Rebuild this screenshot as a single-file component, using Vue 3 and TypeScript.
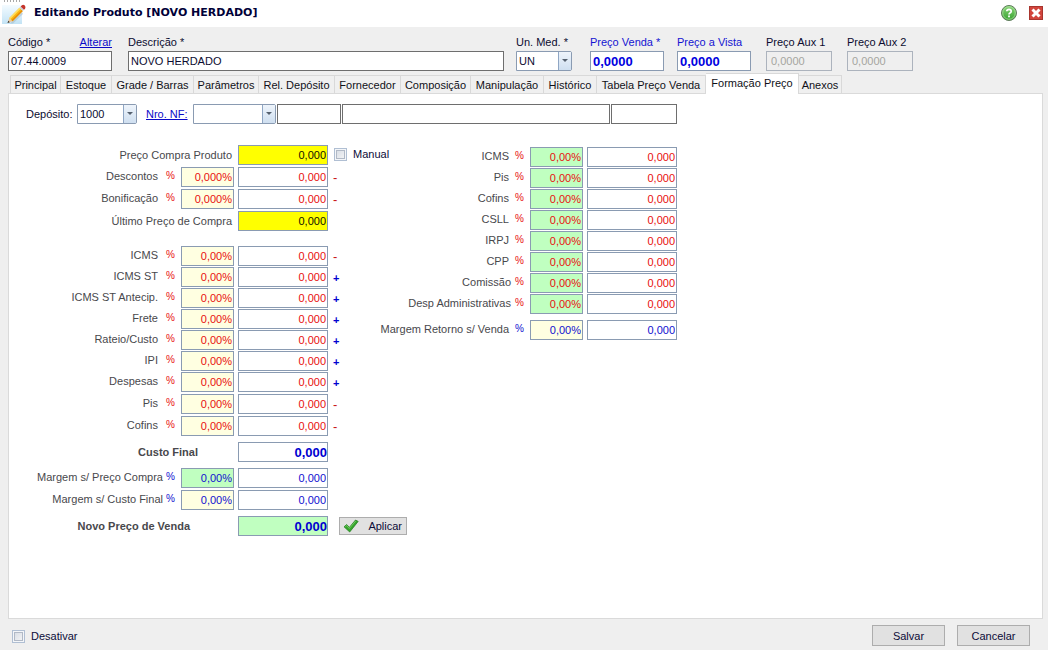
<script setup lang="ts">
import { reactive, ref } from 'vue'

type Tone = 'red' | 'blue' | 'black' | 'total'
type Fill = 'cream' | 'green' | 'yellow' | 'white'

interface Row {
  id: string
  label: string
  kind: 'normal' | 'tight' | 'wide' | 'total' | 'total-long'
  pct?: string
  pctFill?: Fill
  amount: string
  fill: Fill
  tone: Tone
  sign?: '+' | '-'
  extra?: 'manual' | 'apply'
}

interface Group {
  name: string
  rows: Row[]
}

const tabs = [
  'Principal', 'Estoque', 'Grade / Barras', 'Parâmetros', 'Rel. Depósito', 'Fornecedor',
  'Composição', 'Manipulação', 'Histórico', 'Tabela Preço Venda', 'Formação Preço', 'Anexos',
]
const activeTab = ref('Formação Preço')

function cost(id: string, label: string, sign: '+' | '-', pct = '0,00%'): Row {
  return { id, label, kind: 'normal', pct, pctFill: 'cream', amount: '0,000', fill: 'white', tone: 'red', sign }
}

function tax(id: string, label: string, kind: Row['kind'] = 'normal'): Row {
  return { id, label, kind, pct: '0,00%', pctFill: 'green', amount: '0,000', fill: 'white', tone: 'red' }
}

const costGroups = reactive<Group[]>([
  {
    name: 'purchase',
    rows: [
      { id: 'compra', label: 'Preço Compra Produto', kind: 'wide', amount: '0,000', fill: 'yellow', tone: 'black', extra: 'manual' },
      cost('descontos', 'Descontos', '-', '0,000%'),
      cost('bonificacao', 'Bonificação', '-', '0,000%'),
      { id: 'ultimo', label: 'Último Preço de Compra', kind: 'wide', amount: '0,000', fill: 'yellow', tone: 'black' },
    ],
  },
  {
    name: 'charges',
    rows: [
      cost('icms', 'ICMS', '-'),
      cost('icms-st', 'ICMS ST', '+'),
      cost('icms-ant', 'ICMS ST Antecip.', '+'),
      cost('frete', 'Frete', '+'),
      cost('rateio', 'Rateio/Custo', '+'),
      cost('ipi', 'IPI', '+'),
      cost('despesas', 'Despesas', '+'),
    ],
  },
  { name: 'credits', rows: [cost('pis', 'Pis', '-'), cost('cofins', 'Cofins', '-')] },
  {
    name: 'summary',
    rows: [{ id: 'custo', label: 'Custo Final', kind: 'total', amount: '0,000', fill: 'white', tone: 'total' }],
  },
  {
    name: 'summary',
    rows: [
      { id: 'm-compra', label: 'Margem s/ Preço Compra', kind: 'tight', pct: '0,00%', pctFill: 'green', amount: '0,000', fill: 'white', tone: 'blue' },
      { id: 'm-custo', label: 'Margem s/ Custo Final', kind: 'tight', pct: '0,00%', pctFill: 'cream', amount: '0,000', fill: 'white', tone: 'blue' },
    ],
  },
  {
    name: 'summary',
    rows: [{ id: 'novo', label: 'Novo Preço de Venda', kind: 'total-long', amount: '0,000', fill: 'green', tone: 'total', extra: 'apply' }],
  },
])

const saleGroups = reactive<Group[]>([
  {
    name: 'taxes',
    rows: [
      tax('v-icms', 'ICMS'),
      tax('v-pis', 'Pis'),
      tax('v-cofins', 'Cofins'),
      tax('v-csll', 'CSLL'),
      tax('v-irpj', 'IRPJ'),
      tax('v-cpp', 'CPP'),
      tax('v-comissao', 'Comissão', 'tight'),
      tax('v-desp', 'Desp Administrativas', 'tight'),
    ],
  },
  {
    name: 'summary',
    rows: [{ id: 'v-margem', label: 'Margem Retorno s/ Venda', kind: 'normal', pct: '0,00%', pctFill: 'cream', amount: '0,000', fill: 'white', tone: 'blue' }],
  },
])

const columns = [
  { side: 'costs', groups: costGroups },
  { side: 'sales', groups: saleGroups },
]

const product = reactive({
  code: '07.44.0009',
  description: 'NOVO HERDADO',
  unit: 'UN',
  price: '0,0000',
  cash: '0,0000',
  aux1: '0,0000',
  aux2: '0,0000',
  depot: '1000',
  invoice: '',
  manual: false,
  disabled: false,
})
</script>

<template>
  <div class="window">
    <header class="titlebar">
      <span class="grip"></span>
      <svg class="pencil" viewBox="0 0 24 22" aria-hidden="true">
        <defs>
          <linearGradient id="sky" x1="0" y1="0" x2="0" y2="1">
            <stop offset="0" stop-color="#f4fbff" />
            <stop offset="1" stop-color="#c3e3f5" />
          </linearGradient>
        </defs>
        <rect x="0" y="3" width="20" height="19" fill="url(#sky)" />
        <path d="M8 21.500 20 10 21 12 11 21.500Z" fill="#9fb6c4" opacity=".5" />
        <path d="M5.500 21 7.300 15.900 10.600 19.200Z" fill="#efc99a" />
        <path d="M5.500 21 6.300 18.700 7.800 20.200Z" fill="#333" />
        <path d="M7.300 15.900 17.500 5.700 20.800 9 10.600 19.200Z" fill="#fbb913" />
        <path d="M7.300 15.900 17.500 5.700 18.600 6.800 8.400 17Z" fill="#ffe066" />
        <path d="M9.500 18.100 19.700 7.900 20.800 9 10.600 19.200Z" fill="#e58d0c" />
        <path d="M17.500 5.700 18.700 4.500 22 7.800 20.800 9Z" fill="#c9ced3" />
        <path d="M18.700 4.500 19.900 3.300Q21.300 2.200 22.800 3.600 24 5.100 23.100 6.700L22 7.800Z" fill="#c5342b" />
      </svg>
      <h1>Editando Produto [NOVO HERDADO]</h1>
      <button class="icon" type="button" aria-label="Ajuda">
        <svg viewBox="0 0 16 16">
          <defs>
            <linearGradient id="leaf" x1="0" y1="0" x2="0" y2="1">
              <stop offset="0" stop-color="#8ed67c" />
              <stop offset="1" stop-color="#33a02c" />
            </linearGradient>
          </defs>
          <circle cx="8" cy="8" r="7.500" fill="url(#leaf)" stroke="#5f7a5c" />
          <circle cx="8" cy="8" r="6.300" fill="none" stroke="#b5e6a8" stroke-width=".7" />
          <path d="M5.800 6.300Q5.900 4.300 8 4.300 10.200 4.400 10.200 6.200 10.200 7.300 9 7.900 8 8.400 8 9.500" fill="none" stroke="#fff" stroke-width="1.700" />
          <rect x="7.100" y="10.500" width="1.800" height="1.800" fill="#fff" />
        </svg>
      </button>
      <button class="icon" type="button" aria-label="Fechar">
        <svg viewBox="0 0 16 16">
          <rect x="1.500" y="1.500" width="13" height="13" fill="#d2453c" stroke="#a8352e" />
          <path d="M4.500 4.500 11.500 11.500M11.500 4.500 4.500 11.500" stroke="#fff" stroke-width="3" />
        </svg>
      </button>
    </header>

    <form class="body" @submit.prevent>
      <div class="product">
        <div class="field code">
          <div class="caption"><label for="code">Código *</label><a href="#">Alterar</a></div>
          <input id="code" v-model="product.code" class="dark" type="text" />
        </div>
        <div class="field description">
          <label for="description">Descrição *</label>
          <input id="description" v-model="product.description" class="dark" type="text" />
        </div>
        <div class="field unit">
          <label for="unit">Un. Med. *</label>
          <span class="combo">
            <select id="unit" v-model="product.unit"><option>UN</option></select>
            <span class="arrow"></span>
          </span>
        </div>
        <div class="field price">
          <label for="price">Preço Venda *</label>
          <input id="price" v-model="product.price" type="text" />
        </div>
        <div class="field price cash">
          <label for="cash">Preço a Vista</label>
          <input id="cash" v-model="product.cash" type="text" />
        </div>
        <div class="field aux">
          <label for="aux1">Preço Aux 1</label>
          <input id="aux1" v-model="product.aux1" type="text" disabled />
        </div>
        <div class="field aux">
          <label for="aux2">Preço Aux 2</label>
          <input id="aux2" v-model="product.aux2" type="text" disabled />
        </div>
      </div>

      <div class="tabs" role="tablist">
        <button
          v-for="tab in tabs"
          :key="tab"
          type="button"
          role="tab"
          :aria-selected="tab === activeTab"
          :class="{ active: tab === activeTab }"
          @click="activeTab = tab"
        >{{ tab }}</button>
      </div>

      <section class="panel" role="tabpanel">
        <div class="source">
          <label for="depot">Depósito:</label>
          <span class="combo depot">
            <select id="depot" v-model="product.depot"><option>1000</option></select>
            <span class="arrow"></span>
          </span>
          <a href="#">Nro. NF:</a>
          <span class="combo invoice">
            <select v-model="product.invoice" aria-label="Nro. NF"><option value=""></option></select>
            <span class="arrow"></span>
          </span>
          <div class="details">
            <input class="dark" type="text" aria-label="Série" />
            <input class="dark" type="text" aria-label="Nome" />
            <input class="dark" type="text" aria-label="Data" />
          </div>
        </div>

        <div class="pricing">
          <div v-for="column in columns" :key="column.side" class="column" :class="column.side">
            <div v-for="(group, index) in column.groups" :key="index" class="group" :class="group.name">
              <div v-for="row in group.rows" :key="row.id" class="row" :class="[row.kind, row.tone]">
                <label :for="row.id">{{ row.label }}</label>
                <template v-if="row.pct !== undefined">
                  <span class="unit-sign">%</span>
                  <input v-model="row.pct" class="pct" :class="row.pctFill" type="text" :aria-label="row.label + ' %'" />
                </template>
                <input :id="row.id" v-model="row.amount" class="amount" :class="row.fill" type="text" />
                <span v-if="row.sign" class="sign" :class="{ plus: row.sign === '+' }">{{ row.sign }}</span>
                <label v-if="row.extra === 'manual'" class="check manual">
                  <input v-model="product.manual" type="checkbox" />Manual
                </label>
                <button v-if="row.extra === 'apply'" class="push apply" type="button">
                  <svg viewBox="0 0 16 14" aria-hidden="true">
                    <path d="M1 7.800 3.700 5.500 6.300 8.400 12.500 1 15.200 2.400 6.700 13Z" fill="#35a52c" stroke="#1f7d1c" stroke-width=".7" />
                    <path d="M2.300 7.600 3.700 6.600 6.300 9.500 12.700 2" fill="none" stroke="#7ed36b" stroke-width=".8" />
                  </svg>
                  Aplicar
                </button>
              </div>
            </div>
          </div>
        </div>
      </section>

      <footer class="actions">
        <label class="check"><input v-model="product.disabled" type="checkbox" />Desativar</label>
        <button class="push" type="submit">Salvar</button>
        <button class="push" type="button">Cancelar</button>
      </footer>
    </form>
  </div>
</template>

<style>
body {
  background: #efefef;
}
</style>

<style scoped>
.window,
.window * {
  box-sizing: border-box;
}
.window {
  min-height: 100vh;
  display: flex;
  flex-direction: column;
  background: #efefef;
  color: #0c0c30;
  font: 11px/14px "Liberation Sans", Arial, sans-serif;
}
input,
select,
button {
  font: inherit;
  color: inherit;
  margin: 0;
}
input,
select {
  height: 20px;
  border: 1px solid #8a9bb2;
  border-radius: 0;
  background: #fff;
  padding: 0 2px;
  min-width: 0;
}
input.dark {
  border-color: #6e6e6e;
}
a {
  color: #0a0ac8;
}
.titlebar {
  position: relative;
  display: flex;
  align-items: center;
  height: 27px;
  padding: 0 4px 2px 2px;
  background: #fff;
}
.grip {
  position: absolute;
  left: 4px;
  top: 0;
  width: 17px;
  height: 2px;
  background: repeating-linear-gradient(90deg, #a8a8a8 0 1px, #fff 1px 3px);
}
.pencil {
  width: 24px;
  height: 22px;
}
h1 {
  flex: 1;
  margin: 0 0 0 8px;
  font: bold 11px/14px "DejaVu Sans", Verdana, sans-serif;
  color: #000038;
}
.icon {
  width: 16px;
  height: 16px;
  margin-left: 11px;
  padding: 0;
  border: 0;
  background: none;
}
.icon svg {
  display: block;
}
.body {
  flex: 1;
  display: flex;
  flex-direction: column;
}
.product {
  display: flex;
  padding: 8px 135px 0 8px;
}
.field {
  display: flex;
  flex-direction: column;
  gap: 2px;
}
.field input {
  width: 100%;
}
.caption {
  display: flex;
  justify-content: space-between;
}
.code {
  width: 104px;
}
.description {
  flex: 1;
  margin: 0 12px 0 16px;
}
.unit {
  width: 56px;
}
.price {
  width: 74px;
  margin-left: 18px;
  color: #1414d2;
}
.price.cash {
  margin-left: 13px;
}
.price input {
  font-size: 13px;
  font-weight: bold;
  color: #0000e0;
}
.aux {
  width: 66px;
  margin-left: 15px;
}
.aux input {
  background: #efefef;
  border-color: #acb3bd;
  color: #a5a5a0;
  padding-left: 4px;
}
.combo {
  position: relative;
  display: flex;
}
.combo select {
  width: 100%;
  appearance: none;
  border-radius: 0 2px 2px 0;
}
.arrow {
  position: absolute;
  right: 1px;
  top: 1px;
  bottom: 1px;
  width: 13px;
  border-left: 1px solid #8fa6c4;
  background: linear-gradient(#eef4fb, #cfdff0);
  pointer-events: none;
}
.arrow::after {
  content: "";
  position: absolute;
  left: 3px;
  top: 7px;
  border: 3px solid transparent;
  border-top-color: #55606e;
  border-bottom: 0;
}
.tabs {
  display: grid;
  grid-template-columns: 51px 51px 82px 65px 76px 66px 70px 73px 53px 109px 93px 43px;
  align-items: end;
  height: 22px;
  padding-left: 10px;
}
.tabs button {
  height: 18px;
  padding: 0;
  border: 1px solid #d9d9d9;
  border-width: 1px 1px 0 0;
  background: #f0f0f0;
  color: #101018;
  white-space: nowrap;
}
.tabs button:first-child {
  border-left-width: 1px;
}
.tabs button.active {
  position: relative;
  height: 21px;
  margin-bottom: -1px;
  padding-bottom: 2px;
  background: #fff;
}
.panel {
  flex: 1;
  margin: 0 5px 0 8px;
  padding: 10px 17px;
  border: 1px solid #dadada;
  background: #fff;
}
.source {
  display: flex;
  align-items: center;
  width: 651px;
}
.source > label,
.source > a {
  width: 51px;
}
.source > a {
  width: 47px;
  margin-left: 9px;
}
.depot {
  width: 60px;
}
.invoice {
  width: 83px;
}
.details {
  flex: 1;
  display: grid;
  grid-template-columns: 64px 1fr 66px;
  gap: 1px;
  margin-left: 1px;
}
.pricing {
  display: flex;
  padding-top: 21px;
}
.costs {
  width: 348px;
}
.sales {
  padding-top: 2px;
}
.group {
  display: flex;
  flex-direction: column;
  gap: 2px;
}
.charges {
  gap: 1px;
  margin-top: 15px;
}
.taxes {
  gap: 1px;
}
.credits {
  margin-top: 2px;
}
.summary {
  margin-top: 6px;
}
.row {
  display: flex;
  align-items: center;
  height: 20px;
  color: #48484c;
  white-space: nowrap;
}
.row > * {
  flex: none;
}
.row > label:first-child {
  width: 138px;
  padding: 0 6px 3px 0;
  text-align: right;
}
.sales .row > label:first-child {
  padding-right: 3px;
}
.row.tight > label:first-child,
.sales .row.tight > label:first-child {
  padding-right: 1px;
}
.row.wide > label:first-child {
  width: 212px;
  padding-bottom: 1px;
}
.row.total > label:first-child,
.row.total-long > label:first-child {
  width: 212px;
  padding: 0 40px 0 0;
  font-weight: bold;
}
.row.total-long > label:first-child {
  padding-right: 48px;
}
.unit-sign {
  width: 17px;
  padding: 0 0 3px 2px;
  font-size: 10px;
}
.sales .unit-sign {
  width: 18px;
  padding-left: 3px;
}
.row input[type="text"] {
  text-align: right;
  padding: 0 1px;
}
.pct {
  width: 53px;
  margin-right: 4px;
}
.amount {
  width: 90px;
}
.red .unit-sign,
.red input {
  color: #e81010;
}
.blue .unit-sign,
.blue input {
  color: #1010d0;
}
.black input {
  color: #101000;
}
.row.total input[type="text"],
.row.total-long input[type="text"] {
  padding-right: 0;
  font-size: 13px;
  font-weight: bold;
  color: #0000d0;
}
.row input.cream {
  background: #ffffe1;
}
.row input.green {
  background: #c0ffc0;
}
.row input.yellow {
  background: #ffff00;
}
.sign {
  margin-left: 5px;
  padding-top: 2px;
  font-size: 13px;
  color: #c81414;
}
.sign.plus {
  font-size: 11px;
  font-weight: bold;
  color: #0000d0;
}
.check {
  display: flex;
  align-items: center;
  gap: 6px;
  color: #0c0c38;
}
.check input {
  appearance: none;
  width: 13px;
  height: 13px;
  border: 1px solid #b0bfd3;
  background: linear-gradient(135deg, #d3d9e2, #f8f8f8);
  box-shadow: inset 0 0 0 1px #f4f6f9, inset 0 0 0 2px #b1b9c6;
}
.check input:checked {
  background: #4a6a9a;
}
.manual {
  margin-left: 6px;
  padding-bottom: 2px;
}
.push {
  width: 73px;
  height: 21px;
  padding: 0;
  border: 1px solid #adadad;
  background: #e1e1e1;
  color: #0c0c38;
}
.push.apply {
  display: flex;
  align-items: center;
  justify-content: space-between;
  width: 68px;
  height: 18px;
  margin-left: 11px;
  padding: 0 4px 0 3px;
}
.apply svg {
  width: 16px;
  height: 14px;
}
.actions {
  display: flex;
  align-items: flex-start;
  gap: 12px;
  padding: 6px 18px 4px 12px;
}
.actions .check {
  margin: 4px auto 0 0;
}
</style>
